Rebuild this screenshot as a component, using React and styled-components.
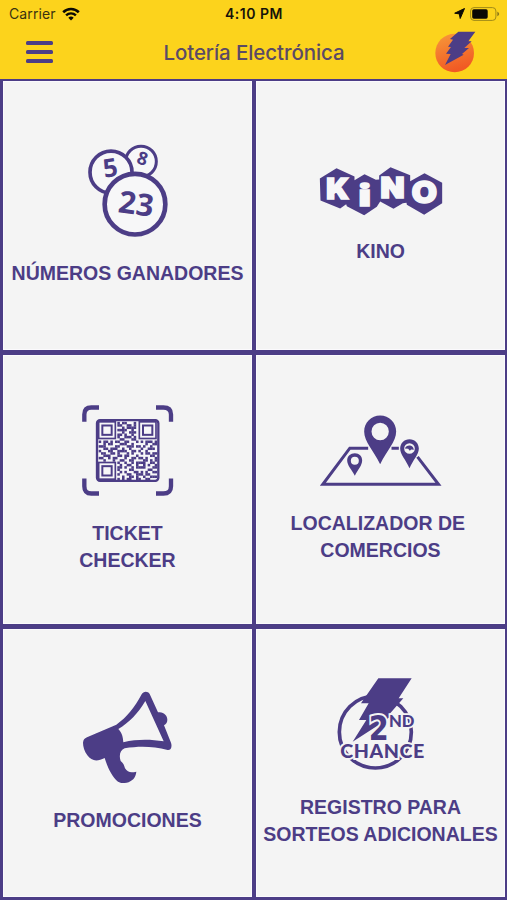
import React from "react"
import styled, { createGlobalStyle } from "styled-components"

const primary = "#4c3d86"
const yellow = "#fcd31c"
const surface = "#f4f4f4"

const GlobalStyle = createGlobalStyle`
  * {
    box-sizing: border-box;
  }
  body {
    margin: 0;
    background: ${primary};
  }
`

const Screen = styled.div`
  display: flex;
  flex-direction: column;
  width: 507px;
  height: 900px;
  overflow: hidden;
  background: ${primary};
  font-family: "Liberation Sans", Arial, sans-serif;
`

const Header = styled.header`
  height: 79px;
  background: ${yellow};
  font-family: Inter, Roboto, sans-serif;
`

const StatusBar = styled.div`
  display: grid;
  grid-template-columns: 1fr auto 1fr;
  align-items: center;
  height: 27px;
  padding: 0 7px 0 9px;
  color: #17130a;
  font-size: 14px;
`

const Carrier = styled.div`
  display: flex;
  align-items: center;
  gap: 6px;
  color: #3a3210;
  letter-spacing: 0.1px;
`

const Clock = styled.time`
  padding-right: 1px;
  font-size: 14px;
  font-weight: 600;
  letter-spacing: 0.5px;
`

const Indicators = styled.div`
  display: flex;
  align-items: center;
  justify-content: flex-end;
  gap: 5px;
`

const NavBar = styled.div`
  display: grid;
  grid-template-columns: 60px 1fr 60px;
  align-items: center;
  height: 52px;
  padding: 0 12px 2px 13px;
`

const MenuButton = styled.button`
  display: flex;
  flex-direction: column;
  gap: 4.4px;
  width: 27px;
  margin-left: 13px;
  padding: 0;
  border: 0;
  background: none;
`

const Bar = styled.span`
  height: 4.4px;
  border-radius: 1.5px;
  background: ${primary};
`

const Title = styled.h1`
  margin: 1px 0 0;
  color: #5b4a66;
  font-size: 20.5px;
  font-weight: 500;
  letter-spacing: -0.08px;
  text-align: center;
  white-space: nowrap;
`

const Grid = styled.main`
  display: grid;
  grid-template-columns: 249px 249px;
  grid-template-rows: 269px 269px 268px;
  gap: 5px 4px;
  padding: 2px 2px 3px 3px;
`

const Tile = styled.a`
  display: flex;
  flex-direction: column;
  align-items: center;
  justify-content: center;
  gap: 24px;
  background: ${surface};
  box-shadow: inset 0 0 0 1px #fbfafd;
`

const Label = styled.span`
  color: ${primary};
  font-size: 19.5px;
  font-weight: bold;
  line-height: 27px;
  text-align: center;
  white-space: pre-line;
`

const Icon = styled.svg`
  display: block;
  flex: none;
  overflow: visible;
`

const WifiIcon = () => (
  <Icon width="18" height="14" viewBox="0 0 18 14" fill="none" stroke="#0c0a04">
    <path d="M1.2 5.2a11.2 11.2 0 0 1 15.6 0" strokeWidth="2.6" />
    <path d="M4.1 8.4a7 7 0 0 1 9.8 0" strokeWidth="2.4" />
    <path d="M6.3 10.8a4 4 0 0 1 5.4 0L9 13.6z" fill="#0c0a04" stroke="none" />
  </Icon>
)

const LocationIcon = () => (
  <Icon width="11" height="11" viewBox="0 0 11 11">
    <path
      d="M10.5.5 6.2 10.5 5.3 5.9.7 5.2z"
      fill="#0c0a04"
      stroke="#0c0a04"
      strokeLinejoin="round"
    />
  </Icon>
)

const BatteryIcon = () => (
  <Icon width="30" height="14" viewBox="0 0 30 14">
    <rect x=".6" y=".6" width="25.3" height="12.8" rx="3.4" fill="none" stroke="#a18a18" />
    <rect x="2.2" y="2.3" width="15.5" height="9.4" rx="1.6" fill="#0a0804" />
    <path d="M27.3 4.8c2.4.7 2.4 3.7 0 4.4z" fill="#8c7818" />
  </Icon>
)

const Logo = () => (
  <Icon width="40" height="42" viewBox="0 0 120 126">
    <defs>
      <linearGradient id="sun" x1="0" y1="0" x2="0.3" y2="1">
        <stop offset="0" stopColor="#f79a3a" />
        <stop offset="1" stopColor="#f15a24" />
      </linearGradient>
    </defs>
    <circle cx="59" cy="66" r="58" fill="url(#sun)" />
    <path
      d="M70 2h51l-21 29h10L88 51h14L81 69l5 2-56 31 17-33-14-1 15-20-9-1 15-21-9-2z"
      fill={primary}
    />
  </Icon>
)

const BallsIcon = () => (
  <Icon
    width="80"
    height="91"
    viewBox="38 43.5 240 273"
    fill="#f7f7f8"
    stroke={primary}
    fontFamily="Open Sans, Noto Sans, sans-serif"
    fontWeight="700"
    textAnchor="middle"
  >
    <circle cx="197" cy="93" r="46" strokeWidth="9" />
    <circle cx="107" cy="125" r="63" strokeWidth="11" />
    <circle cx="179" cy="221" r="91" strokeWidth="14" />
    <g fill={primary} stroke="none">
      <text transform="translate(109 138) rotate(-9)" fontSize="76">5</text>
      <text transform="translate(196 102) rotate(17)" fontSize="54">8</text>
      <text transform="translate(178 252) rotate(8)" fontSize="92">23</text>
    </g>
  </Icon>
)

const KinoIcon = () => (
  <Icon
    width="122"
    height="47"
    viewBox="28.5 34.5 366 141"
    fontFamily="Inter, sans-serif"
    fontWeight="900"
  >
    <path
      d="m78 38 54 25v11l30-18 34 17 10-1v-12l34-25 59 24v18l43-24 53 29v61l-54 35-52-30-1-6-11 1-28 17-40-22-10 16-38 25-52-27-2-6-18 13-59-24-2-66z"
      fill={primary}
    />
    <g fill="#f7f7f8" stroke="#f7f7f8" strokeWidth="5" strokeLinejoin="miter">
      <text x="47" y="130" fontSize="85" textLength="68" lengthAdjust="spacingAndGlyphs">K</text>
      <text
        x="145"
        y="150"
        fontSize="87"
        fontFamily="Inter, sans-serif"
        textLength="36"
        lengthAdjust="spacingAndGlyphs"
      >
        i
      </text>
      <text x="210" y="128" fontSize="86" textLength="72" lengthAdjust="spacingAndGlyphs">N</text>
      <text
        x="303"
        y="142"
        fontSize="88"
        strokeWidth="4"
        textLength="77"
        lengthAdjust="spacingAndGlyphs"
      >
        O
      </text>
    </g>
  </Icon>
)

// 25 x 25 modules, the three finder corners are drawn separately
const modules = [
  "........#.##...#.........",
  "........##..##.#.........",
  "..........#.####.........",
  "........####..#..........",
  "..........#..###.........",
  "........##.#..#..........",
  "........#..###.#.........",
  ".........##...##.........",
  "#.##.#.##..##...#.#.###.#",
  "..#.##...###..#.....#..##",
  "###....##...###.##.#..#..",
  "..##.###..#..#....#..###.",
  "#...##..####..##.#..#....",
  ".##..##.#...#.#...#.##.##",
  "..###...##.##...#.....##.",
  "##..#.##...#..##.##.#...#",
  "..#...#..##..##....##.#.#",
  "........#..#..#.####..##.",
  ".........#..##..#..#.#..#",
  "........##.#..#.####...##",
  "........#....##......##..",
  ".........#.#...##.#.#..##",
  "........#...##..###.##...",
  "..........#..##.#..#..###",
  "........#.#.##..##..##...",
]

const finders = [
  [80, 80],
  [202, 80],
  [80, 202],
]

const QrIcon = () => (
  <Icon width="90" height="90" viewBox="33 32.5 270 270" fill="none" stroke={primary}>
    <path
      d="M37 80V58q0-21 21-21h23M252 37h22q23 0 23 21v22M297 250v23q0 22-23 22h-22M81 295H58q-21 0-21-22v-23"
      strokeWidth="13"
    />
    <rect x="75" y="75" width="184" height="182" rx="9" fill="#f7f7f8" strokeWidth="7" />
    {finders.map(([x, y]) => (
      <g key={`${x}-${y}`}>
        <rect x={x} y={y} width="50" height="50" strokeWidth="5" />
        <rect x={x + 11} y={y + 11} width="28" height="28" strokeWidth="6" />
      </g>
    ))}
    <g fill={primary} stroke="none">
      {modules.map((row, y) =>
        [...row].map((cell, x) =>
          cell === "#" ? (
            <rect key={`${x}-${y}`} x={80 + x * 7} y={80 + y * 7} width="7.6" height="7.6" />
          ) : null
        )
      )}
    </g>
  </Icon>
)

const MapIcon = () => (
  <Icon width="120" height="70" viewBox="32.5 31.5 360 210" fill={primary}>
    <path
      d="M174 128h-55L38 236.5h347L322 154M244 128h22"
      fill="none"
      stroke={primary}
      strokeWidth="9"
    />
    <path
      fillRule="evenodd"
      d="M210 30c27 0 48 21 48 48 0 30-28 57-48 98-20-41-48-68-48-98 0-27 21-48 48-48zm0 22a26 26 0 1 0 0 52 26 26 0 0 0 0-52z"
    />
    <path
      fillRule="evenodd"
      d="M134 143c13 0 22 9 22 22 0 15-13 27-22 46-9-19-23-31-23-46 0-13 10-22 23-22zm0 11a12 12 0 1 0 0 24 12 12 0 0 0 0-24z"
    />
    <path
      fillRule="evenodd"
      d="M298 101c16 0 28 12 28 28 0 18-17 34-28 59-11-25-28-41-28-59 0-16 12-28 28-28zm0 12a16 16 0 1 0 0 32 16 16 0 0 0 0-32z"
    />
    <path d="M284 129q4-10 16-9 9 1 11 13l-8-1-4 4-5-6z" />
  </Icon>
)

const MegaphoneIcon = () => (
  <Icon width="88" height="91" viewBox="36 35 264 273" fill={primary}>
    <path
      fillRule="evenodd"
      d="M209 42c5-10 19-10 24-1l25 55c26-5 38 28 18 39l21 52c4 12 0 23-10 22-44-11-84-12-129-5-13 5-18 20-12 38 7 6 10 10 13 22 8 13 18 13 34 10-2 19-13 29-29 33-14 2-18 1-26-3-18-15-31-42-40-71-22 11-39 10-52-8-9-13-13-26-13-38 1-8 4-13 12-16l88-38c34-24 53-50 76-91zm11 20c-22 37-48 64-81 84 11 11 14 24 15 40 42-10 81-9 121-3z"
    />
  </Icon>
)

const SecondChanceIcon = () => (
  <Icon
    width="86"
    height="91"
    viewBox="40 26 258 273"
    fill={primary}
    stroke={surface}
    paintOrder="stroke"
  >
    <circle cx="152" cy="185" r="108" fill="none" stroke={primary} strokeWidth="11" />
    <path
      d="M161 24h100l-39 60h14l-44 50h12l-41 29-79 51 41-65h-22l29-50h-23z"
      stroke="none"
    />
    <text
      x="132"
      y="208"
      fontFamily="DejaVu Sans, sans-serif"
      fontWeight="700"
      fontSize="101"
      strokeWidth="12"
      textLength="60"
      lengthAdjust="spacingAndGlyphs"
    >
      2
    </text>
    <text
      x="193"
      y="169"
      fontFamily="Lato, sans-serif"
      fontWeight="900"
      fontSize="50"
      strokeWidth="10"
      textLength="76"
    >
      ND
    </text>
    <text
      x="47"
      y="263"
      fontFamily="Lato, sans-serif"
      fontWeight="900"
      fontSize="59"
      strokeWidth="12"
      textLength="252"
    >
      CHANCE
    </text>
  </Icon>
)

const tiles = [
  { label: "NÚMEROS GANADORES", icon: BallsIcon },
  { label: "KINO", icon: KinoIcon },
  { label: "TICKET\nCHECKER", icon: QrIcon },
  { label: "LOCALIZADOR DE\u00a0\nCOMERCIOS", icon: MapIcon },
  { label: "PROMOCIONES", icon: MegaphoneIcon },
  { label: "REGISTRO PARA\nSORTEOS ADICIONALES", icon: SecondChanceIcon },
]

const App = () => {
  return (
    <Screen>
      <GlobalStyle />
      <Header>
        <StatusBar>
          <Carrier>
            Carrier
            <WifiIcon />
          </Carrier>
          <Clock>4:10 PM</Clock>
          <Indicators>
            <LocationIcon />
            <BatteryIcon />
          </Indicators>
        </StatusBar>
        <NavBar>
          <MenuButton aria-label="Menú">
            <Bar />
            <Bar />
            <Bar />
          </MenuButton>
          <Title>Lotería Electrónica</Title>
          <Logo />
        </NavBar>
      </Header>
      <Grid>
        {tiles.map(({ label, icon: TileIcon }) => (
          <Tile key={label}>
            <TileIcon />
            <Label>{label}</Label>
          </Tile>
        ))}
      </Grid>
    </Screen>
  )
}

export default App
